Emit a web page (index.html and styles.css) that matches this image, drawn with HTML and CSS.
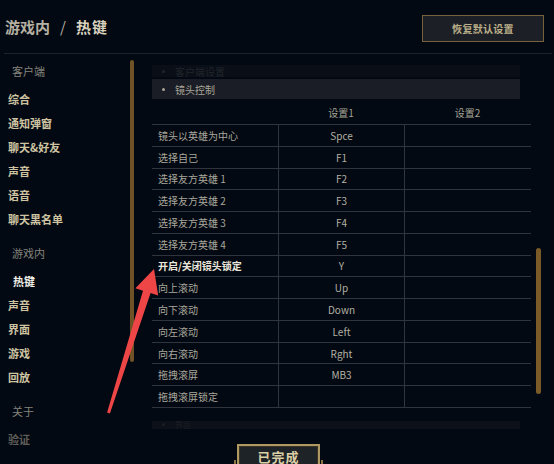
FILE: index.html
```html
<!DOCTYPE html>
<html lang="zh-CN">
<head>
<meta charset="utf-8">
<title>热键</title>
<link rel="stylesheet" href="styles.css">
</head>
<body>
<div class="app">
  <header class="topbar">
    <h1 class="title"><span class="crumb">游戏内</span><span class="sep">/</span><span class="current">热键</span></h1>
    <button class="btn-reset">恢复默认设置</button>
  </header>
  <div class="main">
    <nav class="sidebar">
      <div class="group">
        <div class="group-label">客户端</div>
        <div class="nav-item">综合</div>
        <div class="nav-item">通知弹窗</div>
        <div class="nav-item">聊天&amp;好友</div>
        <div class="nav-item">声音</div>
        <div class="nav-item">语音</div>
        <div class="nav-item">聊天黑名单</div>
      </div>
      <div class="group">
        <div class="group-label">游戏内</div>
        <div class="nav-item active">热键</div>
        <div class="nav-item">声音</div>
        <div class="nav-item">界面</div>
        <div class="nav-item">游戏</div>
        <div class="nav-item">回放</div>
      </div>
      <div class="group">
        <div class="group-label">关于</div>
        <div class="nav-item dim">验证</div>
      </div>
      <div class="side-scroll"></div>
    </nav>
    <section class="content">
      <div class="section-bar faded"><span class="dot"></span><span>客户端设置</span></div>
      <div class="section-bar"><span class="dot"></span><span>镜头控制</span></div>
      <div class="table">
        <div class="thead"><div></div><div>设置1</div><div>设置2</div></div>
        <div class="row"><div class="cell label">镜头以英雄为中心</div><div class="cell">Spce</div><div class="cell"></div></div>
        <div class="row"><div class="cell label">选择自己</div><div class="cell">F1</div><div class="cell"></div></div>
        <div class="row"><div class="cell label">选择友方英雄 1</div><div class="cell">F2</div><div class="cell"></div></div>
        <div class="row"><div class="cell label">选择友方英雄 2</div><div class="cell">F3</div><div class="cell"></div></div>
        <div class="row"><div class="cell label">选择友方英雄 3</div><div class="cell">F4</div><div class="cell"></div></div>
        <div class="row"><div class="cell label">选择友方英雄 4</div><div class="cell">F5</div><div class="cell"></div></div>
        <div class="row strong"><div class="cell label">开启/关闭镜头锁定</div><div class="cell">Y</div><div class="cell"></div></div>
        <div class="row"><div class="cell label">向上滚动</div><div class="cell">Up</div><div class="cell"></div></div>
        <div class="row"><div class="cell label">向下滚动</div><div class="cell">Down</div><div class="cell"></div></div>
        <div class="row"><div class="cell label">向左滚动</div><div class="cell">Left</div><div class="cell"></div></div>
        <div class="row"><div class="cell label">向右滚动</div><div class="cell">Rght</div><div class="cell"></div></div>
        <div class="row"><div class="cell label">拖拽滚屏</div><div class="cell">MB3</div><div class="cell"></div></div>
        <div class="row"><div class="cell label">拖拽滚屏锁定</div><div class="cell"></div><div class="cell"></div></div>
      </div>
      <div class="section-bar faded bottom"><span class="dot"></span><span>界面</span></div>
      <div class="content-scroll"></div>
    </section>
  </div>
  <div class="footer"><button class="btn-done">已完成</button></div>
  <svg class="arrow" width="554" height="464" viewBox="0 0 554 464">
    <polygon points="154,269 158.2,295.5 150.6,293.1 109.9,413.4 107.1,412.6 143,290.7 135.4,288.3" fill="#ee4646"/>
  </svg>
</div>
</body>
</html>
```

FILE: styles.css
```css
* {
  box-sizing: border-box;
  margin: 0;
  padding: 0;
}

html, body {
  width: 554px;
  height: 464px;
  overflow: hidden;
  background: #020912;
}

body {
  font-family: "Noto Sans CJK SC", "Noto Sans", sans-serif;
  color: #a9a59a;
}

.app {
  position: relative;
  width: 554px;
  height: 464px;
}

.topbar {
  height: 54px;
  margin: 0 2px 0 4px;
  padding: 0 8px 0 1px;
  border-bottom: 1px solid #1c212c;
  display: flex;
  align-items: center;
  justify-content: space-between;
}

.title {
  display: flex;
  align-items: center;
  font-size: 15px;
  font-weight: 700;
  line-height: 1;
  color: #b5b0a2;
}

.sep {
  margin: 0 10px;
  font-weight: 400;
}

.current {
  color: #d9d2bf;
  letter-spacing: 1px;
}

.btn-reset {
  width: 122px;
  height: 27px;
  margin-top: 4px;
  background: #1c2026;
  border: 1px solid #75623b;
  color: #bcb08a;
  font-family: "Noto Sans CJK SC", sans-serif;
  font-size: 10px;
  font-weight: 700;
  line-height: 1;
  letter-spacing: 0.3px;
}

.main {
  display: flex;
  height: 410px;
}

.sidebar {
  position: relative;
  width: 140px;
  flex: none;
  padding-top: 5px;
}

.group + .group {
  margin-top: 10px;
}

.group-label {
  height: 24px;
  line-height: 24px;
  padding-left: 12px;
  margin-bottom: 4px;
  font-size: 11px;
  color: #85837c;
}

.nav-item {
  height: 24px;
  line-height: 24px;
  padding-left: 8px;
  font-size: 11px;
  font-weight: 700;
  color: #cfc4a2;
}

.nav-item.active {
  padding-left: 13px;
  color: #f0ede6;
}

.nav-item.dim {
  color: #5e5d58;
}

.side-scroll {
  position: absolute;
  left: 130px;
  top: 6px;
  width: 4px;
  height: 302px;
  background: #6f5226;
  border-radius: 2px;
}

.content {
  position: relative;
  flex: 1;
  padding: 11px 23px 0 12px;
}

.section-bar {
  height: 20px;
  margin-right: 11px;
  padding-left: 10px;
  display: flex;
  align-items: center;
  gap: 10px;
  background: #1a1d25;
  font-size: 10px;
  color: #a8a597;
}

.dot {
  width: 3px;
  height: 3px;
  border-radius: 50%;
  background: currentColor;
}

.section-bar.faded {
  height: 12px;
  margin-bottom: 2px;
  background: #0a0e16;
  color: #21252c;
  overflow: hidden;
}

.section-bar.bottom {
  height: 8px;
  margin-top: 13px;
  background: #0c1018;
  color: #1b1e25;
  font-size: 8px;
}

.thead {
  display: grid;
  grid-template-columns: 126px 126px 1fr;
  height: 25px;
  margin-top: 1px;
  border-bottom: 1px solid #30343d;
  align-items: center;
}

.thead div {
  text-align: center;
  font-size: 10px;
  color: #a5a294;
}

.row {
  display: grid;
  grid-template-columns: 126px 126px 1fr;
  height: 21.77px;
  border-bottom: 1px solid #30343d;
}

.cell {
  display: flex;
  align-items: center;
  font-size: 10px;
  color: #b3afa3;
}

.cell + .cell {
  justify-content: center;
  border-left: 1px solid #30343d;
}

.label {
  padding-left: 6px;
  color: #aaa79c;
}

.row.strong .label {
  color: #ebe7dc;
  font-weight: 700;
}

.content-scroll {
  position: absolute;
  left: 396px;
  top: 194px;
  width: 5px;
  height: 146px;
  background: #7a5a27;
  border-radius: 3px;
}

.footer {
  position: absolute;
  left: 0;
  right: 0;
  top: 444px;
  display: flex;
  justify-content: center;
  padding-left: 3px;
}

.btn-done {
  position: relative;
  width: 83px;
  height: 28px;
  background: #1e2328;
  border: 2px solid #b09862;
  box-shadow: inset 0 0 0 1px #3b3424;
  color: #dccfa5;
  font-family: "Noto Sans CJK SC", sans-serif;
  font-size: 13px;
  font-weight: 700;
  line-height: 1;
  letter-spacing: 1px;
  padding-bottom: 4px;
}

.btn-done::before,
.btn-done::after {
  content: "";
  position: absolute;
  top: 14px;
  width: 2px;
  height: 10px;
  background: #8a7444;
}

.btn-done::before {
  left: -5px;
}

.btn-done::after {
  right: -5px;
}

.arrow {
  position: absolute;
  left: 0;
  top: 0;
  pointer-events: none;
}
```
